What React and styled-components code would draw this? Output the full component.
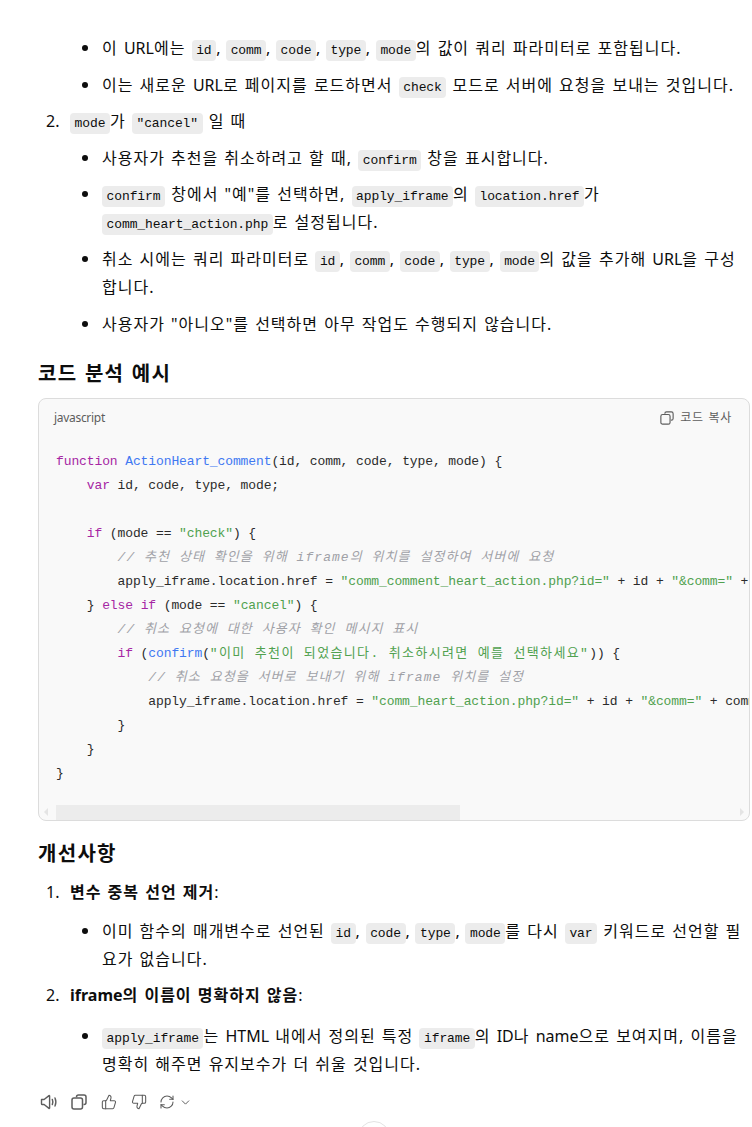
import React from "react";
import styled, { createGlobalStyle } from "styled-components";
import { ThumbsUp, ThumbsDown, RefreshCw, ChevronDown } from "lucide-react";

const Global = createGlobalStyle`
  html, body { margin: 0; padding: 0; background: #fff; }
  body { font-family: "Noto Sans", "Noto Sans CJK KR", sans-serif; color: #0d0d0d; }
`;
const MONO = `"Liberation Mono", "Noto Sans CJK KR", monospace`;

const Page = styled.div`
  position: relative; width: 752px; height: 1127px; overflow: hidden; box-sizing: border-box;
  padding: 34px 2px 0 38px; font-size: 16px; line-height: 28px; letter-spacing: 1px; word-spacing: 1px; white-space: nowrap;
`;
const Ordered = styled.ol`margin: 0; padding: 0 0 0 32px; list-style: none;`;
const Item = styled.li`position: relative; margin: 0 0 8.6px;`;
const Num = styled.span`position: absolute; left: -24px; top: 0; letter-spacing: 0;`;
const Bullets = styled.ul`margin: ${p => p.$top ?? 8.6}px 0 0; padding: 0 0 0 32px; list-style: none;`;
const Bullet = styled.li`
  position: relative; margin: 0 0 8.6px;
  &::before { content: ""; position: absolute; left: -20px; top: 11px; width: 6px; height: 6px; border-radius: 50%; background: #0d0d0d; }
`;
const Code = styled.code`
  font-family: ${MONO}; font-size: 13px; line-height: 1; letter-spacing: -.11px; background: #ececec; border-radius: 4px; padding: 3px 4.6px; word-spacing: 0;
`;
const Lat = styled.span`letter-spacing: 0;`;
const Sep = styled.span`letter-spacing: 0; word-spacing: 1.5px;`;
const Heading = styled.h3`margin: ${p => p.$top}px 0 ${p => p.$bottom}px; font-size: 20px; line-height: 30px; font-weight: 700; letter-spacing: 1.3px;`;
const Block = styled.div`
  width: 712px; box-sizing: border-box; height: 423px; border: 1px solid #dcdcdc; border-radius: 8px; background: #f9f9f9;
  display: flex; flex-direction: column; overflow: hidden;
`;
const BlockHead = styled.div`
  height: 38px; padding: 0 17px 0 15px; display: flex; align-items: center; justify-content: space-between;
  font-size: 12px; color: #5d5d5d; word-spacing: 0; letter-spacing: -.3px; flex: none;
`;
const CopyBtn = styled.span`display: flex; align-items: center; gap: 6px; letter-spacing: .7px; word-spacing: 1px;`;
const Pre = styled.pre`
  margin: 0; padding: 13px 0 0 17px; flex: 1; overflow: hidden; font-family: ${MONO}; font-size: 13px; line-height: 24px; color: #2b2b2b;
  word-spacing: 0; letter-spacing: -.11px;
`;
const Kw = styled.span`color: #a626a4;`;
const Fn = styled.span`color: #4078f2;`;
const Str = styled.span`color: #50a14f; ${p => p.$ko && "letter-spacing: 1.35px;"}`;
const Cm = styled.span`color: #a0a1a7; font-style: italic; letter-spacing: 1.05px;`;
const Scroll = styled.div`height: 15px; flex: none; display: flex; align-items: center; padding: 0 5px; gap: 8px;`;
const Arrow = styled.span`
  width: 0; height: 0; border-top: 4px solid transparent; border-bottom: 4px solid transparent;
  ${p => p.$right ? "border-left: 4px solid #e4e4e4; margin-left: auto;" : "border-right: 4px solid #e4e4e4;"}
`;
const Thumb = styled.div`width: 404px; height: 15px; background: #ececec;`;
const Actions = styled.div`display: flex; align-items: center; margin: 14px 0 0 -4px; color: #5d5d5d;`;
const ActionSlot = styled.span`width: ${p => p.$w ?? 30}px; height: 20px; display: flex; align-items: center; justify-content: center;`;
const Chevron = styled.span`display: flex; margin-left: -1px;`;
const ScrollDown = styled.div`
  position: absolute; left: 358px; top: 1121px; width: 30px; height: 30px; border-radius: 50%; border: 1px solid #e3e3e3; background: #fff;
`;

const SpeakerIcon = () => (
  <svg width="18" height="18" viewBox="0 0 18 18" fill="none" stroke="currentColor" strokeWidth="1.4" strokeLinejoin="round" strokeLinecap="round">
    <path d="M1.5 6.5h2.6L9 2.6c.3-.2.6 0 .6.3v12.2c0 .3-.3.5-.6.3L4.1 11.5H2.3a.8.8 0 0 1-.8-.8z" />
    <path d="M12.3 6.4c.7 1.6.7 3.6 0 5.2" />
    <path d="M15 5c1.100 2.500 1.100 5.500 0 8" />
  </svg>
);
const CopyIcon = ({ size = 16, sw = 1.5 }) => (
  <svg width={size} height={size} viewBox="0 0 16 16" fill="none" stroke="currentColor" strokeWidth={sw} strokeLinejoin="round">
    <path d="M5.500 3.200V3a2 2 0 0 1 2-2H13a2 2 0 0 1 2 2v5.500a2 2 0 0 1-2 2h-.5" />
    <rect x="1" y="4" width="10.500" height="11" rx="2" />
  </svg>
);

const Line = ({ children }) => <>{children}{"\n"}</>;
const C = <Sep>, </Sep>;

export default function App() {
  return (
    <Page>
      <Global />
      <Ordered>
        <Item>
          <Bullets $top={0}>
            <Bullet>이 <Lat>URL</Lat>에는 <Code>id</Code>{C}<Code>comm</Code>{C}<Code>code</Code>{C}<Code>type</Code>{C}<Code>mode</Code>의 값이 쿼리 파라미터로 포함됩니다.</Bullet>
            <Bullet>이는 새로운 <Lat>URL</Lat>로 페이지를 로드하면서 <Code>check</Code> 모드로 서버에 요청을 보내는 것입니다.</Bullet>
          </Bullets>
        </Item>
        <Item>
          <Num>2.</Num>
          <Code>mode</Code>가 <Code>"cancel"</Code> 일 때
          <Bullets>
            <Bullet>사용자가 추천을 취소하려고 할 때, <Code>confirm</Code> 창을 표시합니다.</Bullet>
            <Bullet><Code>confirm</Code> 창에서 "예"를 선택하면, <Code>apply_iframe</Code>의 <Code>location.href</Code>가<br /><Code>comm_heart_action.php</Code>로 설정됩니다.</Bullet>
            <Bullet>취소 시에는 쿼리 파라미터로 <Code>id</Code>{C}<Code>comm</Code>{C}<Code>code</Code>{C}<Code>type</Code>{C}<Code>mode</Code>의 값을 추가해 <Lat>URL</Lat>을 구성<br />합니다.</Bullet>
            <Bullet>사용자가 "아니오"를 선택하면 아무 작업도 수행되지 않습니다.</Bullet>
          </Bullets>
        </Item>
      </Ordered>
      <Heading $top={21} $bottom={9}>코드 분석 예시</Heading>
      <Block>
        <BlockHead>
          <span>javascript</span>
          <CopyBtn><CopyIcon size={14} sw={1.3} />코드 복사</CopyBtn>
        </BlockHead>
        <Pre>
          <Line><Kw>function</Kw> <Fn>ActionHeart_comment</Fn>(id, comm, code, type, mode) {"{"}</Line>
          <Line>    <Kw>var</Kw> id, code, type, mode;</Line>
          <Line> </Line>
          <Line>    <Kw>if</Kw> (mode == <Str>"check"</Str>) {"{"}</Line>
          <Line>        <Cm>// 추천 상태 확인을 위해 iframe의 위치를 설정하여 서버에 요청</Cm></Line>
          <Line>        apply_iframe.location.href = <Str>"comm_comment_heart_action.php?id="</Str> + id + <Str>"&amp;comm="</Str> + comm</Line>
          <Line>    {"}"} <Kw>else if</Kw> (mode == <Str>"cancel"</Str>) {"{"}</Line>
          <Line>        <Cm>// 취소 요청에 대한 사용자 확인 메시지 표시</Cm></Line>
          <Line>        <Kw>if</Kw> (<Fn>confirm</Fn>(<Str $ko>"이미 추천이 되었습니다. 취소하시려면 예를 선택하세요"</Str>)) {"{"}</Line>
          <Line>            <Cm>// 취소 요청을 서버로 보내기 위해 iframe 위치를 설정</Cm></Line>
          <Line>            apply_iframe.location.href = <Str>"comm_heart_action.php?id="</Str> + id + <Str>"&amp;comm="</Str> + comm</Line>
          <Line>        {"}"}</Line>
          <Line>    {"}"}</Line>
          <Line>{"}"}</Line>
        </Pre>
        <Scroll>
          <Arrow />
          <Thumb />
          <Arrow $right />
        </Scroll>
      </Block>
      <Heading $top={18} $bottom={9}>개선사항</Heading>
      <Ordered>
        <Item>
          <Num>1.</Num>
          <strong>변수 중복 선언 제거</strong>:
          <Bullets $top={11}>
            <Bullet>이미 함수의 매개변수로 선언된 <Code>id</Code>{C}<Code>code</Code>{C}<Code>type</Code>{C}<Code>mode</Code>를 다시 <Code>var</Code> 키워드로 선언할 필<br />요가 없습니다.</Bullet>
          </Bullets>
        </Item>
        <Item>
          <Num>2.</Num>
          <strong><Lat>iframe</Lat>의 이름이 명확하지 않음</strong>:
          <Bullets $top={13}>
            <Bullet><Code>apply_iframe</Code>는 <Lat>HTML</Lat> 내에서 정의된 특정 <Code>iframe</Code>의 <Lat>ID</Lat>나 <Lat>name</Lat>으로 보여지며, 이름을<br />명확히 해주면 유지보수가 더 쉬울 것입니다.</Bullet>
          </Bullets>
        </Item>
      </Ordered>
      <Actions>
        <ActionSlot><SpeakerIcon /></ActionSlot>
        <ActionSlot><CopyIcon /></ActionSlot>
        <ActionSlot><ThumbsUp size={16} strokeWidth={1.6} /></ActionSlot>
        <ActionSlot><ThumbsDown size={16} strokeWidth={1.6} /></ActionSlot>
        <ActionSlot $w={26}><RefreshCw size={16} strokeWidth={1.6} /></ActionSlot>
        <Chevron><ChevronDown size={13} strokeWidth={1.8} /></Chevron>
      </Actions>
      <ScrollDown />
    </Page>
  );
}
